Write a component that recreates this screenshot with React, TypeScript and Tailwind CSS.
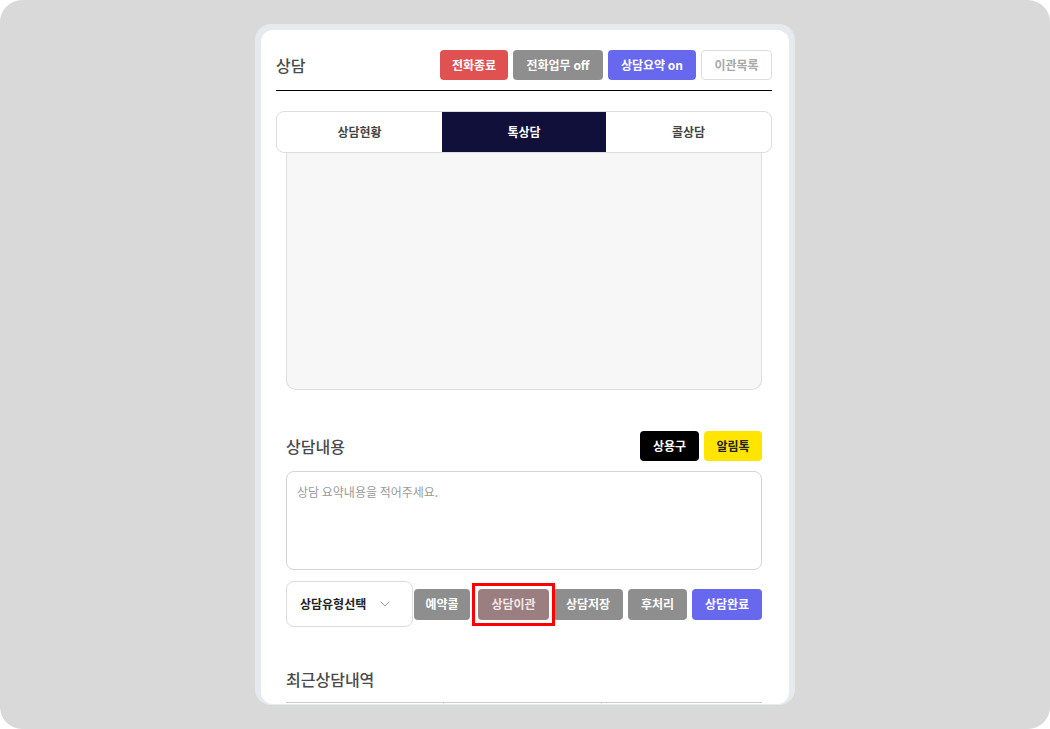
import React from "react";
import { ChevronDown } from "lucide-react";

const font = { fontFamily: '"Noto Sans CJK KR", "Noto Sans", sans-serif' };

export default function App() {
  return (
    <div className="w-[1050px] h-[729px] bg-white" style={font}>
      <div className="w-full h-full bg-[#d9d9d9] rounded-[22px] flex justify-center py-[24px]">
        <div className="w-[540px] h-[681px] bg-[#e6e9ed] rounded-[16px] pt-[6px] px-[6px] pb-[1px]">
          <div className="w-full h-full bg-white rounded-[12px] overflow-hidden pl-[15px] pr-[17px] flex flex-col">
            {/* Header */}
            <div className="shrink-0 mt-[20px] h-[30px] flex items-center justify-between">
              <div className="text-[16px] font-medium text-[#4a4a4a] leading-none">상담</div>
              <div className="flex items-center gap-[5px]">
                <button className="w-[68px] h-[30px] rounded-[4px] bg-[#e05252] text-white text-[12px] font-bold">전화종료</button>
                <button className="w-[90px] h-[30px] rounded-[4px] bg-[#8e8e8e] text-white text-[12px] font-bold">전화업무 off</button>
                <button className="w-[88px] h-[30px] rounded-[4px] bg-[#6868ef] text-white text-[12px] font-bold">상담요약 on</button>
                <button className="w-[71px] h-[30px] rounded-[4px] bg-white border border-[#dddddd] text-[#a8a8a8] text-[12px] font-bold">이관목록</button>
              </div>
            </div>
            <div className="shrink-0 mt-[10px] border-b border-black" />

            {/* Tabs */}
            <div className="shrink-0 mt-[20px] h-[42px] flex border border-[#dddddd] rounded-[8px] overflow-hidden">
              <div className="w-[165px] flex items-center justify-center text-[12px] font-bold text-[#444]">상담현황</div>
              <div className="w-[164px] flex items-center justify-center text-[12px] font-bold text-white bg-[#10103a]">톡상담</div>
              <div className="flex-1 flex items-center justify-center text-[12px] font-bold text-[#444]">콜상담</div>
            </div>
            <div className="shrink-0 mx-[10px] h-[237px] bg-[#f7f7f7] border border-t-0 border-[#dddddd] rounded-b-[10px]" />

            {/* 상담내용 */}
            <div className="shrink-0 mx-[10px] mt-[41px] h-[30px] flex items-center justify-between">
              <div className="text-[16px] font-medium text-[#4a4a4a] leading-none">상담내용</div>
              <div className="flex items-center gap-[5px]">
                <button className="w-[59px] h-[30px] rounded-[4px] bg-black text-white text-[12px] font-bold">상용구</button>
                <button className="w-[58px] h-[30px] rounded-[4px] bg-[#ffe500] text-[#222] text-[12px] font-bold">알림톡</button>
              </div>
            </div>
            <div className="shrink-0 mx-[10px] mt-[10px] h-[99px] border border-[#d4d4d4] rounded-[8px] px-[10px] pt-[11px]">
              <div className="text-[12px] text-[#9a9a9a] leading-[18px]">상담 요약내용을 적어주세요.</div>
            </div>

            {/* Bottom actions */}
            <div className="shrink-0 mx-[10px] mt-[11px] flex items-center">
              <div className="w-[127px] h-[46px] border border-[#dddddd] rounded-[8px] flex items-center justify-between pl-[13px] pr-[19px]">
                <span className="text-[12px] font-bold text-[#222]">상담유형선택</span>
                <ChevronDown size={16} strokeWidth={1.5} color="#a0a0a0" />
              </div>
              <button className="ml-[1px] w-[56px] h-[31px] rounded-[4px] bg-[#8e8e8e] text-white text-[12px] font-bold">예약콜</button>
              <div className="relative ml-[8px]">
                <button className="w-[71px] h-[31px] rounded-[4px] bg-[#9b7f80] text-[#f2e6e6] text-[12px] font-bold block">상담이관</button>
                <div className="absolute -left-[6px] -right-[6px] -top-[6px] -bottom-[6px] border-[3px] border-[#ff0000] pointer-events-none" />
              </div>
              <button className="ml-[4px] w-[70px] h-[31px] rounded-[4px] bg-[#8e8e8e] text-white text-[12px] font-bold">상담저장</button>
              <button className="ml-[5px] w-[59px] h-[31px] rounded-[4px] bg-[#8e8e8e] text-white text-[12px] font-bold">후처리</button>
              <button className="ml-[5px] w-[70px] h-[31px] rounded-[4px] bg-[#6868ef] text-white text-[12px] font-bold">상담완료</button>
            </div>

            {/* 최근상담내역 */}
            <div className="shrink-0 mx-[10px] mt-[41px] text-[16px] font-medium text-[#4a4a4a] leading-[22px]">최근상담내역</div>
            <div className="shrink-0 mx-[10px] mt-[12px] flex border-t border-[#cccccc] h-[40px]">
              <div className="w-[158px] border-r border-[#dddddd]" />
              <div className="w-[158px] border-r border-[#dddddd]" />
              <div className="flex-1" />
            </div>
          </div>
        </div>
      </div>
    </div>
  );
}
